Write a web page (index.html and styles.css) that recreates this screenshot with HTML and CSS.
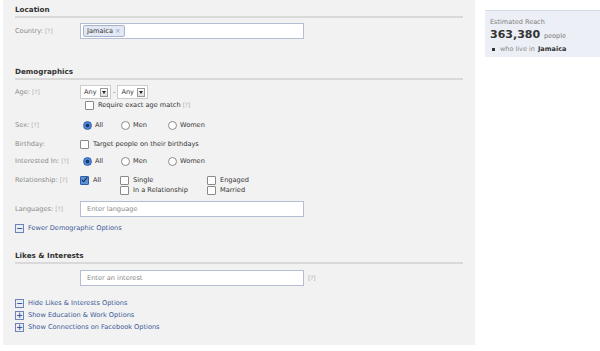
FILE: index.html
```html
<!DOCTYPE html>
<html lang="en">

<head>
    <meta charset="UTF-8">
    <title>Targeting</title>
    <link rel="stylesheet" href="styles.css">
</head>

<body>
    <div class="page">
        <div class="targeting">
            <h3 class="section-title first">Location</h3>
            <div class="row country-row">
                <span class="label">Country: <span class="help">[?]</span></span>
                <div class="text-box">
                    <span class="token">Jamaica <span class="token-x">×</span></span>
                </div>
            </div>

            <h3 class="section-title demo-title">Demographics</h3>
            <div class="row age-row">
                <span class="label">Age: <span class="help">[?]</span></span>
                <div class="field">
                    <span class="select">Any <span class="arrow"></span></span>
                    <span class="dash">-</span>
                    <span class="select">Any <span class="arrow"></span></span>
                </div>
            </div>
            <div class="row exact-row">
                <span class="label"></span>
                <div class="field indent">
                    <span class="check"></span>Require exact age match&nbsp;<span class="help">[?]</span>
                </div>
            </div>
            <div class="row sex-row">
                <span class="label">Sex: <span class="help">[?]</span></span>
                <div class="field">
                    <span class="opt w-all"><span class="radio on"></span>All</span>
                    <span class="opt w-men"><span class="radio"></span>Men</span>
                    <span class="opt"><span class="radio"></span>Women</span>
                </div>
            </div>
            <div class="row birthday-row">
                <span class="label">Birthday:</span>
                <div class="field">
                    <span class="check"></span>Target people on their birthdays
                </div>
            </div>
            <div class="row interested-row">
                <span class="label">Interested In: <span class="help">[?]</span></span>
                <div class="field">
                    <span class="opt w-all"><span class="radio on"></span>All</span>
                    <span class="opt w-men"><span class="radio"></span>Men</span>
                    <span class="opt"><span class="radio"></span>Women</span>
                </div>
            </div>
            <div class="row rel-row">
                <span class="label">Relationship: <span class="help">[?]</span></span>
                <div class="rel-grid">
                    <span class="opt"><span class="check on"></span>All</span>
                    <div class="rel-col mid">
                        <span class="opt"><span class="check"></span>Single</span>
                        <span class="opt"><span class="check"></span>In a Relationship</span>
                    </div>
                    <div class="rel-col">
                        <span class="opt"><span class="check"></span>Engaged</span>
                        <span class="opt"><span class="check"></span>Married</span>
                    </div>
                </div>
            </div>
            <div class="row lang-row">
                <span class="label">Languages: <span class="help">[?]</span></span>
                <div class="text-box placeholder">Enter language</div>
            </div>
            <div class="toggle fewer"><span class="toggle-icon">−</span>Fewer Demographic Options</div>

            <h3 class="section-title likes-title">Likes &amp; Interests</h3>
            <div class="row interest-row">
                <span class="label"></span>
                <div class="text-box placeholder">Enter an interest</div>
                <span class="help side">[?]</span>
            </div>

            <div class="toggles">
                <div class="toggle"><span class="toggle-icon">−</span>Hide Likes &amp; Interests Options</div>
                <div class="toggle"><span class="toggle-icon">+</span>Show Education &amp; Work Options</div>
                <div class="toggle"><span class="toggle-icon">+</span>Show Connections on Facebook Options</div>
            </div>
        </div>

        <div class="sidebar">
            <div class="reach">
                <div class="reach-title">Estimated Reach</div>
                <div class="reach-count">363,380 <span class="reach-unit">people</span></div>
                <div class="reach-item"><span class="bullet"></span>who live in <b>Jamaica</b></div>
            </div>
        </div>
    </div>
</body>

</html>
```

FILE: styles.css
```css
body {
    margin: 0;
    background: #fff;
    font-family: "DejaVu Sans", "Liberation Sans", sans-serif;
    font-size: 6.6px;
    line-height: 10px;
    color: #333;
}

.page {
    display: flex;
    align-items: flex-start;
}

.targeting {
    margin-left: 3px;
    width: 472px;
    height: 345px;
    box-sizing: border-box;
    padding: 4px 12px 0 12px;
    background: #f2f2f2;
}

.section-title {
    margin: 0;
    font-size: 7.2px;
    font-weight: bold;
    line-height: 11px;
    padding-bottom: 1px;
    border-bottom: 2px solid #d9d9d9;
    color: #333;
}

.demo-title {
    margin-top: 27px;
}

.likes-title {
    margin-top: 16px;
}

.row {
    display: flex;
    align-items: center;
    min-height: 12px;
}

.label {
    width: 65px;
    flex-shrink: 0;
    color: #8a8a8a;
}

.help {
    color: #aaa;
    font-size: 5.8px;
}

.help.side {
    margin-left: 4px;
}

.text-box {
    width: 224px;
    height: 16px;
    box-sizing: border-box;
    background: #fff;
    border: 1px solid #b4bdd2;
    display: flex;
    align-items: center;
    padding: 0 2px;
}

.placeholder {
    color: #888;
    padding-left: 6px;
}

.token {
    background: #e3e8f3;
    border: 1px solid #a6b3d0;
    border-radius: 2px;
    padding: 1px 3px;
    line-height: 8px;
    color: #333;
}

.token-x {
    color: #8d9bbb;
}

.country-row {
    margin-top: 5px;
}

.age-row {
    margin-top: 5px;
    min-height: 14px;
}

.field {
    display: flex;
    align-items: center;
}

.indent {
    padding-left: 5px;
}

.select {
    width: 31px;
    height: 14px;
    box-sizing: border-box;
    background: #fff;
    border: 1px solid #ccc;
    display: flex;
    align-items: center;
    justify-content: space-between;
    padding: 0 2px 0 3px;
}

.arrow {
    width: 6px;
    height: 7px;
    border: 1px solid #999;
    background: linear-gradient(#fff, #ddd);
    position: relative;
}

.arrow::after {
    content: "";
    position: absolute;
    left: 1px;
    top: 2px;
    border-left: 2px solid transparent;
    border-right: 2px solid transparent;
    border-top: 3px solid #222;
}

.dash {
    margin: 0 2px;
    color: #555;
}

.sex-row {
    margin-top: 8px;
}

.birthday-row {
    margin-top: 7px;
}

.interested-row {
    margin-top: 5px;
}

.opt {
    display: flex;
    align-items: center;
}

.w-all {
    width: 38px;
}

.w-men {
    width: 47px;
}

.radio {
    width: 7px;
    height: 7px;
    border: 1px solid #8a8a8a;
    border-radius: 50%;
    background: #fff;
    margin: 0 3px 0 3px;
}

.radio.on {
    border-color: #2d5fa8;
    background: radial-gradient(circle, #1b3a6b 0 1.6px, #4f88d8 2.2px);
}

.check {
    width: 7px;
    height: 7px;
    border: 1px solid #8a8a8a;
    border-radius: 1px;
    background: #fff;
    margin-right: 4px;
}

.check.on {
    border-color: #2d5fa8;
    background: #5b8fd8;
    position: relative;
}

.check.on::after {
    content: "";
    position: absolute;
    left: 2px;
    top: -1px;
    width: 2px;
    height: 5px;
    border: solid #1a2b4a;
    border-width: 0 1.5px 1.5px 0;
    transform: rotate(40deg);
}

.rel-row {
    margin-top: 8px;
    align-items: flex-start;
}

.rel-grid {
    display: flex;
}

.rel-grid > .opt {
    width: 40px;
    align-self: flex-start;
}

.rel-col {
    display: flex;
    flex-direction: column;
}

.rel-col.mid {
    width: 87px;
}

.lang-row {
    margin-top: 6px;
}

.toggle {
    display: flex;
    align-items: center;
    color: #3b5998;
    line-height: 12px;
}

.fewer {
    margin-top: 5px;
}

.toggle-icon {
    width: 7px;
    height: 7px;
    border: 1px solid #6d84b4;
    background: #e9edf5;
    color: #3b5998;
    font-size: 8px;
    font-weight: bold;
    line-height: 7px;
    text-align: center;
    margin-right: 4px;
}

.interest-row {
    margin-top: 6px;
}

.toggles {
    margin-top: 11px;
}

.sidebar {
    margin-left: 10px;
    margin-top: 10px;
    flex: 1;
}

.reach {
    background: #eceff6;
    border-top: 1px solid #d4dae8;
    padding: 6px 5px 0 5px;
    height: 47px;
    box-sizing: border-box;
}

.reach-title {
    color: #808080;
    font-size: 6.5px;
    line-height: 10px;
}

.reach-count {
    font-size: 11px;
    font-weight: bold;
    color: #333;
    line-height: 16px;
}

.reach-unit {
    font-size: 6.5px;
    font-weight: normal;
    color: #777;
}

.reach-item {
    color: #888;
    font-size: 6.5px;
    line-height: 11px;
    display: flex;
    align-items: center;
}

.reach-item b {
    color: #333;
    margin-left: 3px;
}

.bullet {
    width: 3px;
    height: 3px;
    background: #333;
    margin: 0 5px 0 2px;
}
```
